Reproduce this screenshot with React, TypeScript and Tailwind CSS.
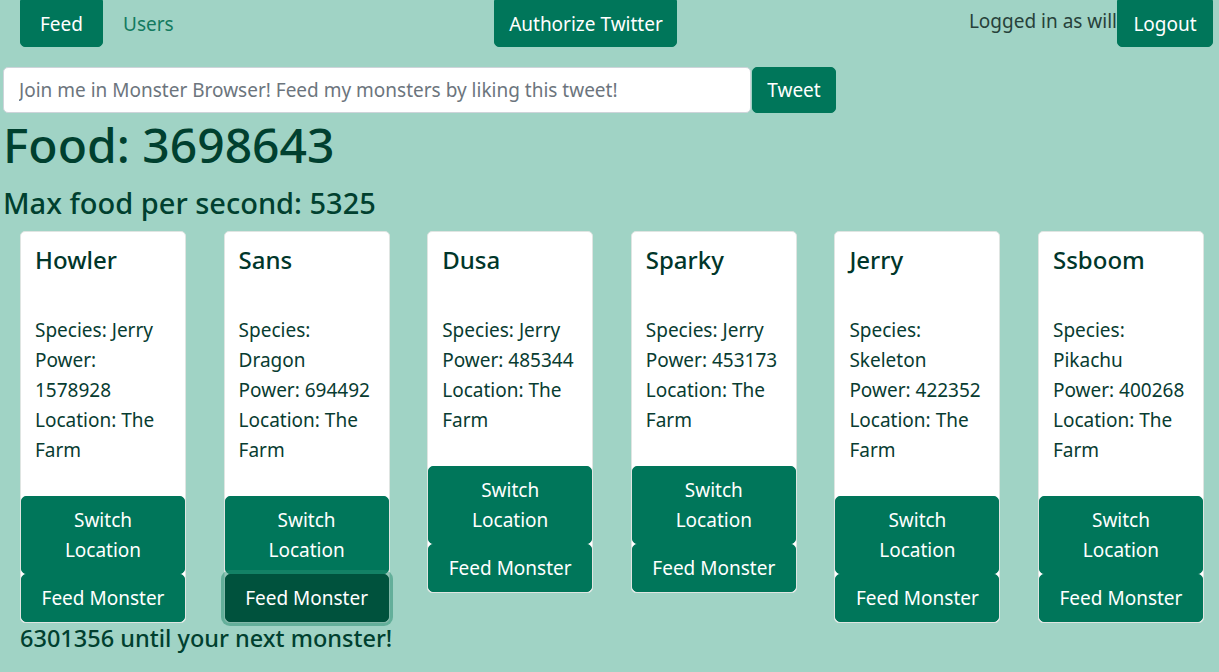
import React from 'react';

type Monster = {
  name: string;
  species: string;
  power: number;
  location: string;
};

const monsters: Monster[] = [
  { name: 'Howler', species: 'Jerry', power: 1578928, location: 'The Farm' },
  { name: 'Sans', species: 'Dragon', power: 694492, location: 'The Farm' },
  { name: 'Dusa', species: 'Jerry', power: 485344, location: 'The Farm' },
  { name: 'Sparky', species: 'Jerry', power: 453173, location: 'The Farm' },
  { name: 'Jerry', species: 'Skeleton', power: 422352, location: 'The Farm' },
  { name: 'Ssboom', species: 'Pikachu', power: 400268, location: 'The Farm' },
];

const btn = 'bg-[#00765a] text-white text-[19px] leading-[30px] border border-[#00765a]';

const MonsterCard = ({ monster, focused }: { monster: Monster; focused: boolean }) => (
  <div className="w-[166px] bg-white border border-[#dfe5e2] rounded-[5px] flex flex-col">
    <div className="pt-[13px] px-[14px] pb-[31px] text-[#083c31]">
      <h5 className="text-[24px] leading-[30px] font-medium text-[#00362a] mb-[40px]">{monster.name}</h5>
      <p className="text-[19px] leading-[30px]">
        Species: {monster.species}
        <br />
        Power: {monster.power}
        <br />
        Location: {monster.location}
      </p>
    </div>
    <button className={`${btn} w-full rounded-[5px] py-[8px] px-[12px]`}>Switch Location</button>
    <button
      className={
        focused
          ? 'bg-[#00523d] text-white text-[19px] leading-[30px] border border-[#00523d] w-full rounded-[5px] py-[8px] shadow-[0_0_0_4px_rgba(38,140,112,0.5)]'
          : `${btn} w-full rounded-[5px] py-[8px]`
      }
    >
      Feed Monster
    </button>
  </div>
);

export default function App() {
  return (
    <div className="min-h-screen bg-[#a0d3c5] font-['Noto_Sans',sans-serif] text-[#083c31]">
      <nav className="flex items-start justify-between pl-[20px] pr-[6px]">
        <div className="flex items-center w-[183px]">
          <button className={`${btn} h-[47px] w-[83px] rounded-b-[5px]`}>Feed</button>
          <a className="ml-[20px] text-[19px] leading-[30px] text-[#137a5f]">Users</a>
        </div>
        <button className={`${btn} h-[47px] w-[183px] rounded-b-[5px]`}>Authorize Twitter</button>
        <div className="flex items-start">
          <span className="text-[19px] leading-[30px] text-[#27413a] mt-[6px]">Logged in as will</span>
          <button className={`${btn} h-[47px] w-[96px] rounded-b-[5px]`}>Logout</button>
        </div>
      </nav>

      <div className="flex pl-[3px] mt-[20px]">
        <input
          className="w-[748px] h-[46px] bg-white rounded-[5px] border border-[#ced4da] px-[15px] text-[19px] placeholder:text-[#6c757d] outline-none"
          placeholder="Join me in Monster Browser! Feed my monsters by liking this tweet!"
        />
        <button className={`${btn} ml-[1px] w-[84px] h-[46px] rounded-[5px]`}>Tweet</button>
      </div>

      <h1 className="pl-[3px] mt-[3px] text-[48px] leading-[58px] font-medium text-[#00402f]">Food: 3698643</h1>
      <h4 className="pl-[3px] mt-[12px] text-[29px] leading-[34px] font-medium text-[#00402f]">
        Max food per second: 5325
      </h4>

      <div className="flex items-start gap-[37.6px] pl-[20px] mt-[11px]">
        {monsters.map((m, i) => (
          <MonsterCard key={m.name} monster={m} focused={i === 1} />
        ))}
      </div>

      <h5 className="pl-[20px] mt-[1px] text-[23.5px] leading-[29px] font-medium text-[#00402f]">
        6301356 until your next monster!
      </h5>
    </div>
  );
}
